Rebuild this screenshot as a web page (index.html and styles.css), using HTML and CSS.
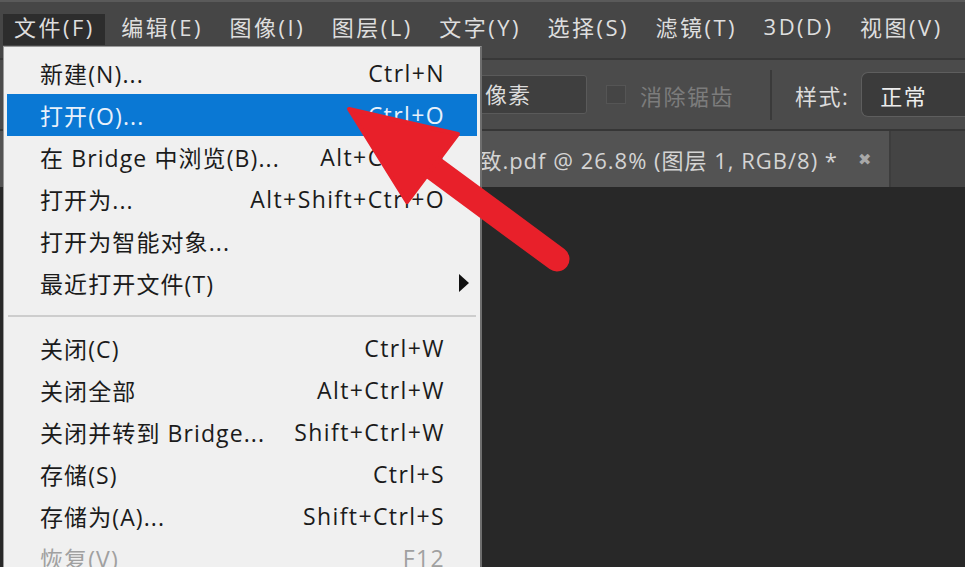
FILE: index.html
```html
<!DOCTYPE html>
<html lang="zh-CN">
<head>
<meta charset="utf-8">
<title>Photoshop 文件菜单</title>
<link rel="stylesheet" href="styles.css">
</head>
<body>
<div class="app">
  <nav class="menubar">
    <span class="mb-item active">文件(F)</span>
    <span class="mb-item">编辑(E)</span>
    <span class="mb-item">图像(I)</span>
    <span class="mb-item">图层(L)</span>
    <span class="mb-item">文字(Y)</span>
    <span class="mb-item">选择(S)</span>
    <span class="mb-item">滤镜(T)</span>
    <span class="mb-item">3D(D)</span>
    <span class="mb-item">视图(V)</span>
  </nav>
  <div class="toolbar">
    <div class="field">像素</div>
    <span class="checkbox"></span>
    <span class="label-dim">消除锯齿</span>
    <span class="vsep"></span>
    <span class="label">样式:</span>
    <div class="select">正常</div>
  </div>
  <div class="tabrow">
    <div class="tab">
      <span class="tab-title">致.pdf @ 26.8% (图层 1, RGB/8) *</span>
      <span class="tab-close">✖</span>
    </div>
  </div>
  <div class="canvas"></div>

  <div class="dropdown">
    <div class="item"><span class="lbl">新建(N)...</span><span class="key">Ctrl+N</span><span class="sub"></span></div>
    <div class="item hl"><span class="lbl">打开(O)...</span><span class="key">Ctrl+O</span><span class="sub"></span></div>
    <div class="item"><span class="lbl">在 Bridge 中浏览(B)...</span><span class="key">Alt+Ctrl+O</span><span class="sub"></span></div>
    <div class="item"><span class="lbl">打开为...</span><span class="key">Alt+Shift+Ctrl+O</span><span class="sub"></span></div>
    <div class="item"><span class="lbl">打开为智能对象...</span><span class="key"></span><span class="sub"></span></div>
    <div class="item"><span class="lbl">最近打开文件(T)</span><span class="key"></span><span class="sub"><svg class="tri" width="10" height="18" viewBox="0 0 10 18"><polygon points="0,0 10,9 0,18" fill="#111"/></svg></span></div>
    <div class="sep"></div>
    <div class="item"><span class="lbl">关闭(C)</span><span class="key">Ctrl+W</span><span class="sub"></span></div>
    <div class="item"><span class="lbl">关闭全部</span><span class="key">Alt+Ctrl+W</span><span class="sub"></span></div>
    <div class="item"><span class="lbl">关闭并转到 Bridge...</span><span class="key">Shift+Ctrl+W</span><span class="sub"></span></div>
    <div class="item"><span class="lbl">存储(S)</span><span class="key">Ctrl+S</span><span class="sub"></span></div>
    <div class="item"><span class="lbl">存储为(A)...</span><span class="key">Shift+Ctrl+S</span><span class="sub"></span></div>
    <div class="item disabled"><span class="lbl">恢复(V)</span><span class="key">F12</span><span class="sub"></span></div>
  </div>

  <svg class="arrow" width="965" height="567" viewBox="0 0 965 567">
    <line x1="420" y1="158" x2="557" y2="259" stroke="#e8202a" stroke-width="25" stroke-linecap="round"/>
    <polygon points="349,109 458,134 407,202" fill="#e8202a" stroke="#e8202a" stroke-width="4" stroke-linejoin="round"/>
  </svg>
</div>
</body>
</html>
```
FILE: styles.css
```css
* { box-sizing: border-box; }
html, body { margin: 0; padding: 0; }
body {
  width: 965px;
  height: 567px;
  overflow: hidden;
  background: #282828;
  font-family: "Open Sans", "Noto Sans CJK SC", sans-serif;
}
.app {
  position: relative;
  width: 965px;
  height: 567px;
  overflow: hidden;
  background: #464646;
  display: flex;
  flex-direction: column;
}
.menubar {
  display: flex;
  align-items: center;
  gap: 5.5px;
  height: 47px;
  padding: 12px 0 2px 3px;
  border-top: 2px solid #5a5a5a;
  background: #464646;
}
.mb-item {
  height: 31px;
  padding: 0 10px 8px 11px;
  display: flex;
  align-items: center;
  font-size: 22px;
  letter-spacing: 2.5px;
  color: #dedede;
  white-space: nowrap;
}
.mb-item.active {
  background: #2d2d2d;
}
.toolbar {
  margin-top: 11px;
  height: 73px;
  border-top: 2px solid #383838;
  border-bottom: 2px solid #363636;
  background: #4b4b4b;
  display: flex;
  align-items: center;
  color: #dcdcdc;
  font-size: 22px;
}
.field {
  margin-left: 440px;
  width: 147px;
  height: 39px;
  padding-left: 44px;
  padding-bottom: 3px;
  display: flex;
  align-items: center;
  background: #3f3f3f;
  border: 1px solid #5a5a5a;
  border-radius: 3px;
  letter-spacing: 1px;
}
.checkbox {
  margin-left: 19px;
  width: 20px;
  height: 19px;
  background: #454545;
  border: 1px solid #555;
}
.label-dim {
  margin-left: 14px;
  color: #7c7c7c;
  letter-spacing: 1.5px;
}
.vsep {
  margin-left: 36px;
  width: 2px;
  height: 50px;
  background: #3a3a3a;
}
.label {
  margin-left: 23px;
  letter-spacing: 1.5px;
}
.select {
  margin-left: 12px;
  flex: 1;
  height: 45px;
  padding-left: 18px;
  display: flex;
  align-items: center;
  background: #3b3b3b;
  border: 1px solid #5e5e5e;
  border-right: none;
  border-radius: 7px 0 0 7px;
  color: #ececec;
  letter-spacing: 1.5px;
}
.tabrow {
  height: 56px;
  background: #444444;
  display: flex;
}
.tab {
  width: 891px;
  height: 56px;
  background: #535353;
  border-right: 2px solid #3d3d3d;
  display: flex;
  align-items: center;
  justify-content: flex-end;
  padding-right: 18px;
  gap: 20px;
}
.tab-title {
  font-size: 22px;
  letter-spacing: 1px;
  color: #d4d4d4;
  white-space: nowrap;
}
.tab-close {
  font-size: 16px;
  color: #a8a8a8;
}
.canvas {
  flex: 1;
  background: #282828;
}
.dropdown {
  position: absolute;
  left: 3px;
  top: 46px;
  width: 479px;
  height: 540px;
  background: #f0f0f0;
  border: 1px solid #9a9a9a;
  border-right: 2px solid #6e6e6e;
  padding: 5px 3px;
  font-size: 23px;
  color: #1b1b1b;
}
.item {
  height: 42px;
  display: flex;
  align-items: center;
  padding-left: 33px;
  white-space: nowrap;
}
.item .lbl {
  flex: 1;
  letter-spacing: 1.1px;
}
.item .key {
  letter-spacing: 1.4px;
  margin-right: -1px;
}
.item .sub {
  width: 33px;
  display: flex;
  align-items: center;
  padding-left: 15px;
}
.item.hl {
  background: #0a78d4;
  color: #e8f1fb;
}
.item.disabled {
  color: #a0a0a0;
}
.sep {
  height: 23px;
  display: flex;
  align-items: center;
  padding: 0 1px;
}
.sep::before {
  content: "";
  flex: 1;
  height: 2px;
  background: #cdcdcd;
}
.arrow {
  position: absolute;
  left: 0;
  top: 0;
  pointer-events: none;
}
```
